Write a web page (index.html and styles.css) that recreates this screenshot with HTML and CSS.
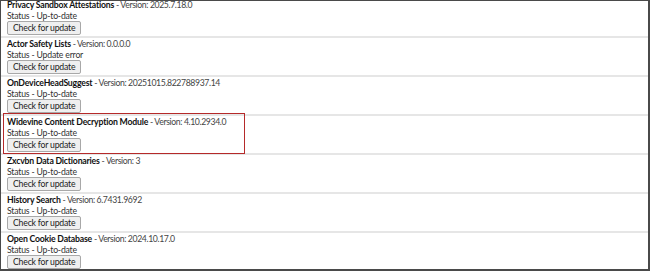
FILE: index.html
```html
<!DOCTYPE html>
<html>
<head>
<meta charset="utf-8">
<link rel="stylesheet" href="styles.css">
</head>
<body>
<div class="frame">
  <div class="list">
    <div class="row first">
      <div class="title"><b>Privacy Sandbox Attestations</b> - Version: 2025.7.18.0</div>
      <div class="status">Status - Up-to-date</div>
      <button class="btn">Check for update</button>
    </div>
    <div class="row">
      <div class="title"><b>Actor Safety Lists</b> - Version: 0.0.0.0</div>
      <div class="status">Status - Update error</div>
      <button class="btn">Check for update</button>
    </div>
    <div class="row">
      <div class="title"><b>OnDeviceHeadSuggest</b> - Version: 20251015.822788937.14</div>
      <div class="status">Status - Up-to-date</div>
      <button class="btn">Check for update</button>
    </div>
    <div class="row highlighted">
      <div class="title"><b>Widevine Content Decryption Module</b> - Version: 4.10.2934.0</div>
      <div class="status">Status - Up-to-date</div>
      <button class="btn">Check for update</button>
      <div class="mark"></div>
    </div>
    <div class="row">
      <div class="title"><b>Zxcvbn Data Dictionaries</b> - Version: 3</div>
      <div class="status">Status - Up-to-date</div>
      <button class="btn">Check for update</button>
    </div>
    <div class="row">
      <div class="title"><b>History Search</b> - Version: 6.7431.9692</div>
      <div class="status">Status - Up-to-date</div>
      <button class="btn">Check for update</button>
    </div>
    <div class="row last">
      <div class="title"><b>Open Cookie Database</b> - Version: 2024.10.17.0</div>
      <div class="status">Status - Up-to-date</div>
      <button class="btn">Check for update</button>
    </div>
  </div>
</div>
</body>
</html>
```
FILE: styles.css
```css
html, body {
  margin: 0;
  padding: 0;
  background: #ffffff;
}
.frame {
  width: 650px;
  height: 271px;
  box-sizing: border-box;
  border-top: 1px solid #4a4a4a;
  border-left: 1px solid #4a4a4a;
  border-right: 2px solid #4a4a4a;
  border-bottom: 2px solid #4a4a4a;
  overflow: hidden;
  font-family: "Lato", "Open Sans", sans-serif;
  font-size: 8.7px;
  letter-spacing: -0.2px;
  color: #222;
}
.list {
  display: flex;
  flex-direction: column;
  margin-top: -2px;
}
.row {
  position: relative;
  padding: 0 0 1px 6px;
  border-bottom: 2px solid #e6e6e6;
  display: flex;
  flex-direction: column;
  align-items: flex-start;
}
.row.last {
  border-bottom: none;
}
.title {
  line-height: 11px;
  height: 11px;
  color: #444;
  letter-spacing: -0.38px;
}
.title b {
  color: #111;
  font-weight: 700;
  letter-spacing: -0.2px;
}
.status {
  line-height: 11px;
  height: 11px;
  color: #333;
}
.btn {
  margin: 0;
  height: 14px;
  padding: 0 5px;
  font-family: inherit;
  font-size: 8.7px;
  letter-spacing: -0.2px;
  line-height: 12px;
  color: #222;
  background: #efefef;
  border: 1px solid #a8a8a8;
  border-radius: 2px;
}
.mark {
  position: absolute;
  left: 2px;
  top: -3px;
  width: 242px;
  height: 41px;
  box-sizing: border-box;
  border: 1.5px solid #b52a2a;
}
```
